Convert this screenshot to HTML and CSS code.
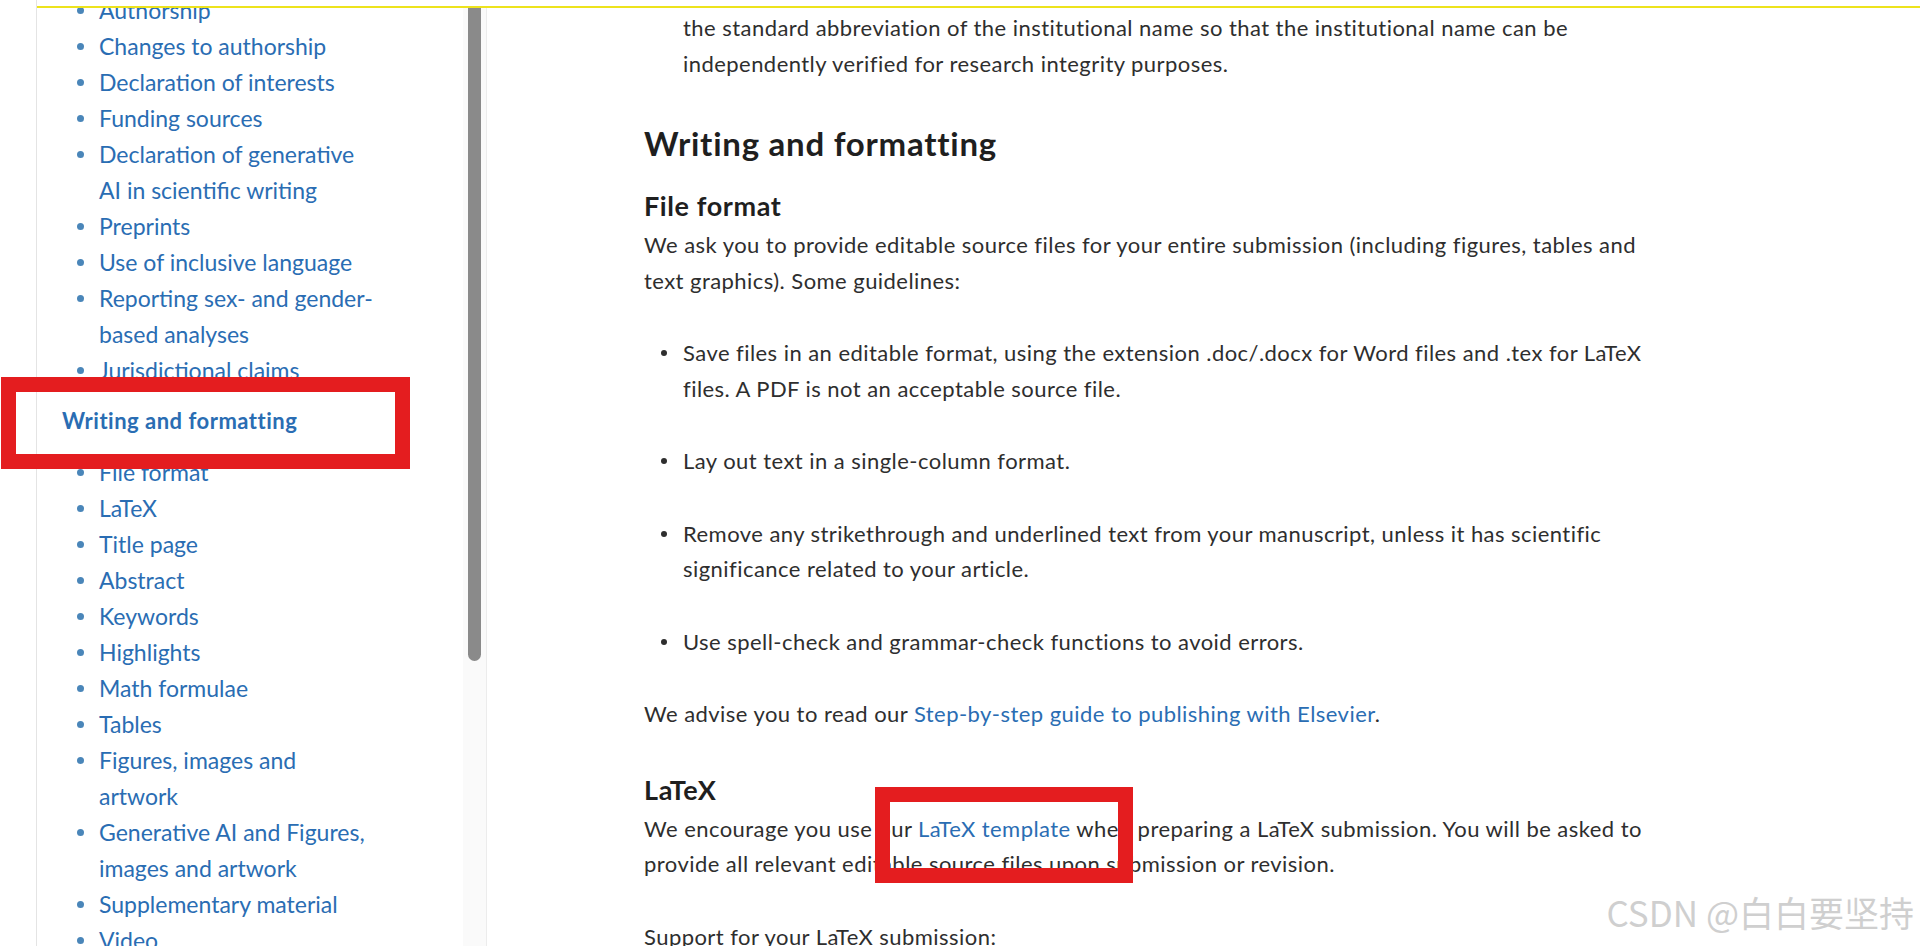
FILE: index.html
```html
<!DOCTYPE html>
<html lang="en">
<head>
  <meta charset="UTF-8" />
  <meta name="viewport" content="width=device-width, initial-scale=1.0" />
  <title>Guide for authors | Writing and formatting</title>
  <link rel="stylesheet" href="styles.css">
</head>
<body>
  <div class="page">
    <aside class="toc">
      <div class="toc-list">
        <ul class="toc-items toc-top">
          <li><a href="#">Authorship</a></li>
          <li><a href="#">Changes to authorship</a></li>
          <li><a href="#">Declaration of interests</a></li>
          <li><a href="#">Funding sources</a></li>
          <li><a href="#">Declaration of generative AI in scientific writing</a></li>
          <li><a href="#">Preprints</a></li>
          <li><a href="#">Use of inclusive language</a></li>
          <li><a href="#">Reporting sex- and gender-based analyses</a></li>
          <li><a href="#">Jurisdictional claims</a></li>
        </ul>
        <a href="#" class="toc-head">Writing and formatting</a>
        <ul class="toc-items">
          <li><a href="#">File format</a></li>
          <li><a href="#">LaTeX</a></li>
          <li><a href="#">Title page</a></li>
          <li><a href="#">Abstract</a></li>
          <li><a href="#">Keywords</a></li>
          <li><a href="#">Highlights</a></li>
          <li><a href="#">Math formulae</a></li>
          <li><a href="#">Tables</a></li>
          <li><a href="#">Figures, images and artwork</a></li>
          <li><a href="#">Generative AI and Figures, images and artwork</a></li>
          <li><a href="#">Supplementary material</a></li>
          <li><a href="#">Video</a></li>
          <li><a href="#">Research data</a></li>
        </ul>
      </div>
      <div class="toc-track"><div class="toc-thumb"></div></div>
    </aside>

    <main class="content">
      <ul class="bullets">
        <li class="cont">the standard abbreviation of the institutional name so that the institutional name can be independently verified for research integrity purposes.</li>
      </ul>

      <h2 class="sec-title">Writing and formatting</h2>

      <h3 class="sub-title">File format</h3>
      <p>We ask you to provide editable source files for your entire submission (including figures, tables and text graphics). Some guidelines:</p>
      <ul class="bullets">
        <li>Save files in an editable format, using the extension .doc/.docx for Word files and .tex for LaTeX files. A PDF is not an acceptable source file.</li>
        <li>Lay out text in a single-column format.</li>
        <li>Remove any strikethrough and underlined text from your manuscript, unless it has scientific significance related to your article.</li>
        <li>Use spell-check and grammar-check functions to avoid errors.</li>
      </ul>
      <p>We advise you to read our <a href="#">Step-by-step guide to publishing with Elsevier</a>.</p>

      <h3 class="sub-title">LaTeX</h3>
      <p>We encourage you use our <a href="#">LaTeX template</a> when preparing a LaTeX submission. You will be asked to provide all relevant editable source files upon submission or revision.</p>
      <p>Support for your LaTeX submission:</p>
    </main>
  </div>

  <div class="topbar"></div>
  <div class="mark mark-nav"></div>
  <div class="mark mark-link"></div>
  <div class="watermark">CSDN @白白要坚持</div>
</body>
</html>
```

FILE: styles.css
```css
html, body {
  margin: 0;
  height: 100%;
  overflow: hidden;
  background: #fff;
}
body {
  font-family: Lato, 'Noto Sans', sans-serif;
  color: #2e2e2e;
}
a {
  color: #2a6db3;
  text-decoration: none;
}
.page {
  display: flex;
  height: 946px;
  padding-left: 36px;
}

/* left table of contents */
.toc {
  display: flex;
  flex-shrink: 0;
  width: 449px;
  border-left: 1px solid #e4e4e4;
  border-right: 1px solid #ececec;
}
.toc-list {
  flex: 1;
  overflow: hidden;
}
.toc-items {
  list-style: none;
  margin: 0;
  padding: 0 84px 0 62px;
}
.toc-top {
  margin-top: -8px;
}
.toc-items li {
  position: relative;
  font-size: 23px;
  line-height: 36px;
}
.toc-items li::before {
  content: "";
  position: absolute;
  left: -22px;
  top: 15px;
  width: 7px;
  height: 7px;
  border-radius: 50%;
  background: #4a86b9;
}
.toc-head {
  display: block;
  margin: 15px 0;
  padding-left: 25px;
  font-size: 22px;
  font-weight: bold;
  letter-spacing: 0.5px;
  line-height: 36px;
}
.toc-track {
  width: 23px;
  padding: 0 5px;
  box-sizing: border-box;
  background: #fafafa;
}
.toc-thumb {
  height: 661px;
  background: #8a8a8a;
  border-radius: 0 0 7px 7px;
}

/* article */
.content {
  flex-shrink: 0;
  width: 1020px;
  margin-left: 157px;
  padding-top: 10px;
  font-size: 22px;
  letter-spacing: 0.45px;
  line-height: 35.5px;
}
.content p {
  margin: 0 0 37px;
}
.bullets {
  list-style: none;
  margin: 0 0 37px;
  padding-left: 39px;
}
.bullets li {
  position: relative;
  margin-bottom: 37px;
}
.bullets li:last-child {
  margin-bottom: 0;
}
.bullets li::before {
  content: "";
  position: absolute;
  left: -22px;
  top: 15px;
  width: 6px;
  height: 6px;
  border-radius: 50%;
  background: #2e2e2e;
}
.bullets li.cont::before {
  display: none;
}
.sec-title {
  margin: 42px 0 27px;
  font-size: 33px;
  letter-spacing: 0.75px;
  line-height: 40px;
  color: #1f1f1f;
}
.sub-title {
  margin: 42px 0 5px;
  font-size: 27px;
  letter-spacing: 0.6px;
  line-height: 32px;
  color: #1f1f1f;
}
.sec-title + .sub-title {
  margin-top: 0;
}

/* overlays on the screenshot */
.topbar {
  position: absolute;
  top: 0;
  left: 37px;
  right: 0;
  height: 6px;
  background: #fff;
  border-bottom: 2px solid #ede31c;
}
.mark {
  position: absolute;
  box-sizing: border-box;
  border: 15px solid #e41d1f;
}
.mark-nav {
  left: 1px;
  top: 377px;
  width: 409px;
  height: 92px;
}
.mark-link {
  left: 875px;
  top: 787px;
  width: 258px;
  height: 96px;
}
.watermark {
  position: absolute;
  right: 6px;
  top: 890px;
  font-family: 'Noto Sans CJK SC', sans-serif;
  font-size: 35px;
  line-height: 44px;
  color: #cfcfcf;
}
```
